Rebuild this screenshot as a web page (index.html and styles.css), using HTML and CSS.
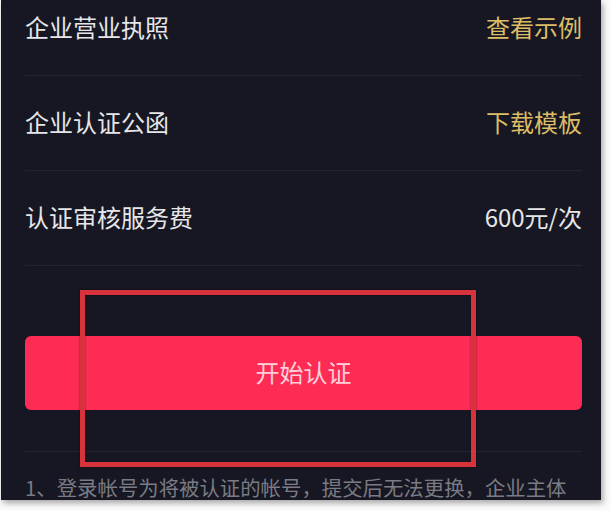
FILE: index.html
```html
<!DOCTYPE html>
<html lang="zh-CN">
<head>
<meta charset="utf-8">
<title>企业认证</title>
<link rel="stylesheet" href="styles.css">
</head>
<body>
<div class="panel">
  <div class="list">
    <div class="row"><span class="label">企业营业执照</span><span class="link">查看示例</span></div>
    <div class="row"><span class="label">企业认证公函</span><span class="link">下载模板</span></div>
    <div class="row"><span class="label">认证审核服务费</span><span class="value">600元/次</span></div>
  </div>
  <button class="start">开始认证</button>
  <div class="divider"></div>
  <p class="note">1、登录帐号为将被认证的帐号，提交后无法更换，企业主体</p>
  <div class="highlight"></div>
</div>
</body>
</html>
```
FILE: styles.css
```css
html, body {
  margin: 0;
  padding: 0;
  background: #fbfbfb;
}
body {
  font-family: "Noto Sans CJK SC", "Noto Sans", sans-serif;
  width: 611px;
  height: 511px;
}
.panel {
  display: flow-root;
  position: relative;
  width: 600px;
  height: 500px;
  margin-left: 1px;
  box-sizing: border-box;
  padding: 0 19px 0 24px;
  background: #161722;
  box-shadow: 2px 3px 6px rgba(0, 0, 0, 0.35);
}
.list {
  margin-top: -19px;
}
.row {
  height: 95px;
  box-sizing: border-box;
  padding-bottom: 3px;
  border-bottom: 1px solid #23242e;
  display: flex;
  align-items: center;
  justify-content: space-between;
  font-size: 24px;
  line-height: 30px;
}
.label {
  color: #e6e6e9;
}
.link {
  color: #dcbd66;
}
.value {
  color: #e6e6e9;
}
.start {
  display: block;
  width: 100%;
  height: 74px;
  margin-top: 70px;
  border: none;
  border-radius: 6px;
  background: #fe2c55;
  color: rgba(255, 255, 255, 0.78);
  font-family: inherit;
  font-size: 24px;
  padding: 0 0 3px;
}
.divider {
  height: 1px;
  margin-top: 41px;
  background: #23242e;
}
.note {
  margin: 23px 0 0;
  font-size: 20.4px;
  line-height: 24px;
  color: #7a7b84;
  white-space: nowrap;
}
.highlight {
  position: absolute;
  left: 79px;
  top: 290px;
  width: 396px;
  height: 177px;
  box-sizing: border-box;
  border: 5px solid #d8323c;
  box-shadow: 0 0 2px rgba(0, 0, 0, 0.5), inset 0 0 2px rgba(0, 0, 0, 0.5);
}
```
